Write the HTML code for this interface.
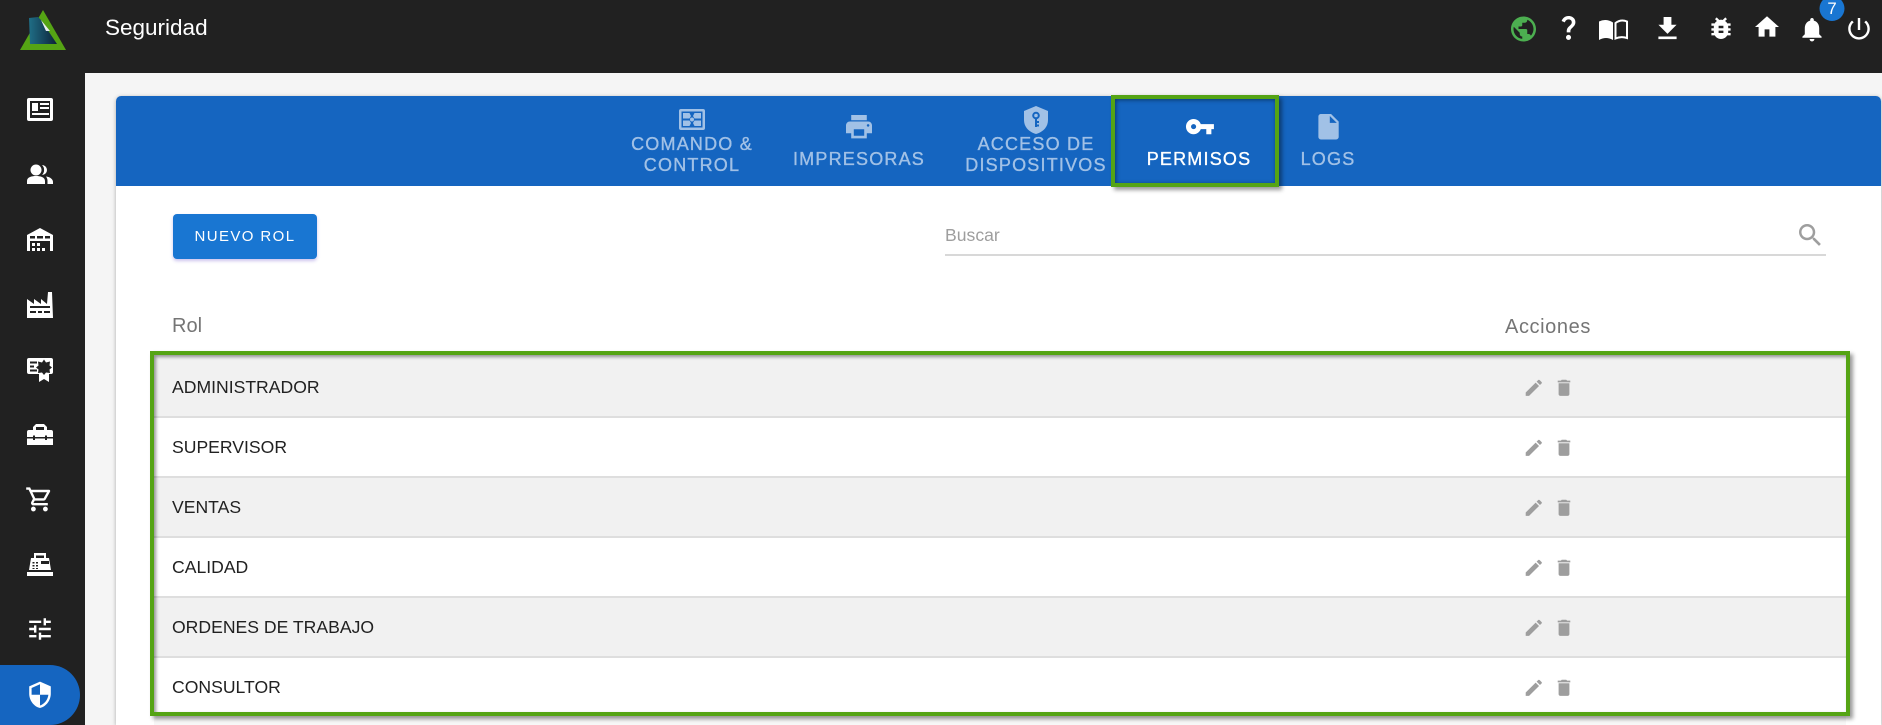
<!DOCTYPE html>
<html lang="es">
<head>
<meta charset="utf-8">
<title>Seguridad</title>
<style>
html,body{margin:0;padding:0;width:1882px;height:725px;overflow:hidden;background:#f5f5f5;font-family:"Liberation Sans",Arial,sans-serif}
div{box-sizing:border-box}
#wrap{position:relative;width:1882px;height:725px;overflow:hidden}
.a{position:absolute}
.t{position:absolute;white-space:nowrap;line-height:24px;height:24px}
.tab{position:absolute;white-space:nowrap;text-align:center;font-size:18px;letter-spacing:1.2px;line-height:21px;color:#a1c1e6;width:240px;-webkit-text-stroke:.35px currentColor}
.row{position:absolute;left:154px;width:1692px;height:60px;border-bottom:2px solid #dedede}
.name{position:absolute;left:172px;font-size:17.6px;line-height:24px;height:24px;color:#212121;white-space:nowrap}
svg{position:absolute;left:0;top:0}
</style>
</head>
<body>
<div id="wrap">
<div class="a" style="left:0;top:0;width:1882px;height:73px;background:#212121"></div>
<div class="a" style="left:0;top:0;width:85px;height:725px;background:#212121"></div>
<div class="a" style="left:0;top:665px;width:80px;height:60px;background:#1565c0;border-radius:0 30px 30px 0"></div>

<div class="a" style="left:116px;top:96px;width:1765px;height:629px;background:#fff;border-radius:5px 5px 0 0;box-shadow:0 1px 4px rgba(0,0,0,.3)"></div>
<div class="a" style="left:116px;top:96px;width:1765px;height:90px;background:#1565c0;border-radius:5px 5px 0 0"></div>

<div class="a" style="left:173px;top:214px;width:144px;height:45px;background:#1976d2;border-radius:4px;box-shadow:0 2px 3px rgba(90,60,200,.3)"></div>
<div class="a" style="left:945px;top:254px;width:881px;height:2px;background:#d8d8d8"></div>

<div class="row" style="top:355px;height:63px;background:#f1f1f1"></div>
<div class="row" style="top:418px;background:#fff"></div>
<div class="row" style="top:478px;background:#f1f1f1"></div>
<div class="row" style="top:538px;background:#fff"></div>
<div class="row" style="top:598px;background:#f1f1f1"></div>
<div class="row" style="top:658px;height:55px;background:#fff;border-bottom:0"></div>
<div class="a" style="left:154px;top:716px;width:1692px;height:9px;background:#f7f7f7"></div>

<div class="a" style="left:150px;top:351px;width:1700px;height:365px;border:4px solid #55a414;box-shadow:3px 3px 4px rgba(0,0,0,.4),inset 2px 2px 3px rgba(0,0,0,.4)"></div>
<div class="a" style="left:1111px;top:95px;width:168px;height:92px;border:4px solid #55a414;box-shadow:3px 3px 4px rgba(0,0,0,.4),inset 1px 1px 4px rgba(0,0,0,.45)"></div>

<svg width="1882" height="725" viewBox="0 0 1882 725" xmlns="http://www.w3.org/2000/svg">
<defs>
<linearGradient id="lg" x1="0" y1="0" x2="1" y2="0"><stop offset="0" stop-color="#1f6e86"/><stop offset="1" stop-color="#0d2238"/></linearGradient>
<path id="ed" d="M3 17.25V21h3.75L17.81 9.94l-3.75-3.75L3 17.25zM20.71 7.04c.39-.39.39-1.02 0-1.41l-2.34-2.34c-.39-.39-1.02-.39-1.41 0l-1.83 1.83 3.75 3.75 1.83-1.83z"/>
<path id="de" d="M6 19c0 1.1.9 2 2 2h8c1.1 0 2-.9 2-2V7H6v12zM19 4h-3.5l-1-1h-5l-1 1H5v2h14V4z"/>
</defs>

<!-- logo -->
<path d="M43 10L66 50H20Z" fill="#55a414"/>
<path d="M29 18L38 17L41 20L57 44H30Z" fill="url(#lg)"/>
<path d="M41 20L50 31L46 31Z" fill="#e8eef0"/>

<g fill="#fff" fill-rule="evenodd">
<!-- newspaper -->
<path d="M29 98H51a2 2 0 0 1 2 2V119a2 2 0 0 1-2 2H29a2 2 0 0 1-2-2V100a2 2 0 0 1 2-2ZM30 101V118H50V101Z"/>
<path d="M32 103H38V111H32ZM40 103H49V105H40ZM40 107H49V109H40ZM32 113H49V115H32Z"/>
<!-- people -->
<circle cx="36" cy="170" r="5.5"/>
<path d="M42 165a5 5 0 0 1 0 10a7 7 0 0 0 0-10ZM27 184V181C27 177 32 176 36 176C40 176 45 177 45 181V184ZM46 176.5C50 177 53 179 53 182V184H47.5V181C47.5 179 47 178 46 176.5Z"/>
<!-- warehouse -->
<path d="M27 251V235L40 228L53 235V251H50V241H30V251ZM30 236V238.5H35V236ZM37 236V238.5H43V236ZM45 236V238.5H50V236Z"/>
<path d="M32 243H35V246H32ZM37 243H40V246H37ZM32 248H35V251H32ZM37 248H40V251H37ZM42 248H45V251H42Z"/>
<!-- factory -->
<path d="M27 318V299L34 304V299L41 304V299L47 304L48 292H52L53 318ZM30 306V308H50V306ZM30 311V313H36V311ZM38 311V313H42V311ZM44 311V313H50V311Z"/>
<!-- award -->
<path d="M29 358H51a2 2 0 0 1 2 2V372a2 2 0 0 1-2 2H49V382L44 379L39 382V374H29a2 2 0 0 1-2-2V360a2 2 0 0 1 2-2ZM30 361.5V363.5H37V361.5ZM30 365.5V367.5H34V365.5ZM30 369.5V371.5H37V369.5ZM44 359.5L46 362.5L50 361.5L49.5 365.5L52 367.5L49.5 369.5L50 373L46 372.5L44 375L42 372.5L38 373L38.5 369.5L36 367.5L38.5 365.5L38 361.5L42 362.5Z"/>
<!-- briefcase -->
<path d="M36 424H44L47 427V430H51a2 2 0 0 1 2 2V437H47V435.5H45V437H35V435.5H33V437H27V432a2 2 0 0 1 2-2H33V427ZM36 427V430H44V427ZM27 438.5H33V440H35V438.5H45V440H47V438.5H53V445H27Z"/>
<!-- cart -->
<g transform="translate(25,485) scale(1.2)"><path d="M15.55 13c.75 0 1.41-.41 1.75-1.03l3.58-6.49c.37-.66-.11-1.48-.87-1.48H5.21l-.94-2H1v2h2l3.6 7.59-1.35 2.44C4.52 15.37 5.48 17 7 17h12v-2H7l1.1-2h7.45zM6.16 6h12.15l-2.76 5H8.53L6.16 6zM7 18c-1.1 0-1.99.9-1.99 2S5.9 22 7 22s2-.9 2-2-.9-2-2-2zm10 0c-1.1 0-1.99.9-1.99 2s.89 2 1.99 2 2-.9 2-2-.9-2-2-2z"/></g>
<!-- cash register -->
<path d="M34 553H46V558H44V555.5H36V558H34ZM31 558H49L51 570H29ZM41 561V564H49V561ZM32.5 562V563.5H34.5V562ZM36 562V563.5H38V562ZM32.5 565V566.5H34.5V565ZM36 565V566.5H38V565ZM32.5 568V569H34.5V568ZM36 568V569H38V568ZM27 572H53V576H27Z"/>
<!-- tune -->
<g transform="translate(25.6,614.6) scale(1.2)"><path d="M3 17v2h6v-2H3zM3 5v2h10V5H3zm10 16v-2h8v-2h-8v-2h-2v6h2zM7 9v2H3v2h4v2h2V9H7zm14 4v-2H11v2h10zm-6-4h2V7h4V5h-4V3h-2v6z"/></g>
<!-- security -->
<g transform="translate(25.6,680.4) scale(1.2)"><path d="M12 1L3 5v6c0 5.55 3.84 10.74 9 12 5.16-1.26 9-6.45 9-12V5l-9-4zm0 10.99h7c-.53 4.12-3.28 7.79-7 8.94V12H5V6.3l7-3.11v8.8z"/></g>
</g>

<!-- top right -->
<g transform="translate(1508.5,14) scale(1.25)" fill="#4caf50"><path d="M12 2C6.48 2 2 6.48 2 12s4.48 10 10 10 10-4.48 10-10S17.52 2 12 2zm-1 17.93c-3.95-.49-7-3.86-7-7.93 0-.62.08-1.21.21-1.79L9 15v1c0 1.1.9 2 2 2v1.93zm6.9-2.54c-.26-.81-1-1.39-1.9-1.39h-1v-3c0-.55-.45-1-1-1H8v-2h2c.55 0 1-.45 1-1V7h2c1.1 0 2-.9 2-2v-.41c2.93 1.19 5 4.06 5 7.41 0 2.08-.8 3.97-2.1 5.39z"/></g>
<g fill="#fff">
<g transform="translate(1553.4,12.2) scale(1.26)"><path d="M11.07 12.85c.77-1.39 2.25-2.21 3.11-3.44.91-1.29.4-3.7-2.18-3.7-1.69 0-2.52 1.28-2.87 2.34L6.54 6.96C7.25 4.83 9.18 3 11.99 3c2.35 0 3.96 1.07 4.78 2.41.7 1.15 1.11 3.3.03 4.9-1.2 1.77-2.35 2.31-2.97 3.45-.25.46-.35.76-.35 2.24h-2.89c-.01-.78-.13-2.05.48-3.15zM14 20c0 1.1-.9 2-2 2s-2-.9-2-2 .9-2 2-2 2 .9 2 2z"/></g>
<path d="M1599 21.5Q1606 18 1613 22.5V40Q1606 36 1599 40Z"/>
<path d="M1615.5 23Q1621 19 1627 21.5V38Q1621 36 1615.5 38.5Z" fill="none" stroke="#fff" stroke-width="2"/>
<g transform="translate(1651.9,13.1) scale(1.3)"><path d="M5 20h14v-2H5v2zM19 9h-4V3H9v6H5l7 7 7-7z"/></g>
<g transform="translate(1706.6,13.8) scale(1.2)"><path d="M20 8h-2.81c-.45-.78-1.07-1.45-1.82-1.96L17 4.41 15.59 3l-2.17 2.17C12.96 5.06 12.49 5 12 5c-.49 0-.96.06-1.41.17L8.41 3 7 4.41l1.62 1.63C7.88 6.55 7.26 7.22 6.81 8H4v2h2.09c-.05.33-.09.66-.09 1v1H4v2h2v1c0 .34.04.67.09 1H4v2h2.81c1.04 1.79 2.97 3 5.19 3s4.15-1.21 5.19-3H20v-2h-2.09c.05-.33.09-.66.09-1v-1h2v-2h-2v-1c0-.34-.04-.67-.09-1H20V8zm-6 8h-4v-2h4v2zm0-4h-4v-2h4v2z"/></g>
<g transform="translate(1752.6,12.6) scale(1.2)"><path d="M10 20v-6h4v6h5v-8h3L12 3 2 12h3v8z"/></g>
<g transform="translate(1797.6,15) scale(1.2)"><path d="M12 22c1.1 0 2-.9 2-2h-4c0 1.1.89 2 2 2zm6-6v-5c0-3.07-1.64-5.64-4.5-6.32V4c0-.83-.67-1.5-1.5-1.5s-1.5.67-1.5 1.5v.68C7.63 5.36 6 7.92 6 11v5l-2 2v1h16v-1l-2-2z"/></g>
<g transform="translate(1844.6,14.4) scale(1.2)"><path d="M13 3h-2v10h2V3zm4.83 2.17l-1.42 1.42C17.99 7.86 19 9.81 19 12c0 3.87-3.13 7-7 7s-7-3.13-7-7c0-2.19 1.01-4.14 2.58-5.42L6.17 5.17C4.23 6.82 3 9.26 3 12c0 4.97 4.03 9 9 9s9-4.03 9-9c0-2.74-1.23-5.18-3.17-6.83z"/></g>
</g>
<circle cx="1832" cy="8.5" r="12.5" fill="#1976d2"/>

<!-- tabs -->
<g fill="#a1c1e6" fill-rule="evenodd">
<path d="M681 109H703a2 2 0 0 1 2 2V128a2 2 0 0 1-2 2H681a2 2 0 0 1-2-2V111a2 2 0 0 1 2-2ZM681.5 111.5V127.5H702.5V111.5Z"/>
<path d="M683 113H689.5L691 116L689.5 118.5H683ZM694.5 113H701V118.5H694.5L693 116ZM683 120.5H689.5L691 123L689.5 126H683ZM694.5 120.5H701V126H694.5L693 123ZM692 117.5a2 2 0 1 1 0 4a2 2 0 1 1 0-4Z"/>
<g transform="translate(843.4,111.1) scale(1.3)"><path d="M19 8H5c-1.66 0-3 1.34-3 3v6h4v4h12v-4h4v-6c0-1.66-1.34-3-3-3zm-3 11H8v-5h8v5zm3-7c-.55 0-1-.45-1-1s.45-1 1-1 1 .45 1 1-.45 1-1 1zm-1-9H6v4h12V3z"/></g>
<path d="M1036 106L1048 111V120C1048 127 1043 132 1036 134C1029 132 1024 127 1024 120V111Z"/>
<g transform="translate(1313.3,111.5) scale(1.27)"><path d="M6 2c-1.1 0-1.99.9-1.99 2L4 20c0 1.1.89 2 1.99 2H18c1.1 0 2-.9 2-2V8l-6-6H6zm7 7V3.5L18.5 9H13z"/></g>
</g>
<g fill="none" stroke="#1565c0" stroke-width="2"><circle cx="1036" cy="115.5" r="2.8"/><path d="M1036 118.5V127M1036 122H1039M1036 125.5H1039"/></g>
<g transform="translate(1184.7,111.4) scale(1.27)" fill="#fff"><path d="M12.65 10C11.83 7.67 9.61 6 7 6c-3.31 0-6 2.69-6 6s2.69 6 6 6c2.61 0 4.83-1.67 5.65-4H17v4h4v-4h2v-4H12.65zM7 14c-1.1 0-2-.9-2-2s.9-2 2-2 2 .9 2 2-.9 2-2 2z"/></g>

<!-- search -->
<g transform="translate(1795.25,220.25) scale(1.25)" fill="#9e9e9e"><path d="M15.5 14h-.79l-.28-.27C15.41 12.59 16 11.11 16 9.5 16 5.91 13.09 3 9.5 3S3 5.91 3 9.5 5.91 16 9.5 16c1.61 0 3.09-.59 4.23-1.57l.27.28v.79l5 4.99L20.49 19l-4.99-5zm-6 0C7.01 14 5 11.99 5 9.5S7.01 5 9.5 5 14 7.01 14 9.5 11.99 14 9.5 14z"/></g>

<!-- row actions -->
<g fill="#9e9e9e">
<use href="#ed" transform="translate(1523,377) scale(.9)"/><use href="#de" transform="translate(1553.2,377) scale(.9)"/>
<use href="#ed" transform="translate(1523,437) scale(.9)"/><use href="#de" transform="translate(1553.2,437) scale(.9)"/>
<use href="#ed" transform="translate(1523,497) scale(.9)"/><use href="#de" transform="translate(1553.2,497) scale(.9)"/>
<use href="#ed" transform="translate(1523,557) scale(.9)"/><use href="#de" transform="translate(1553.2,557) scale(.9)"/>
<use href="#ed" transform="translate(1523,617) scale(.9)"/><use href="#de" transform="translate(1553.2,617) scale(.9)"/>
<use href="#ed" transform="translate(1523,677) scale(.9)"/><use href="#de" transform="translate(1553.2,677) scale(.9)"/>
</g>
</svg>

<div class="t" style="left:105px;top:16px;font-size:22.5px;color:#fff">Seguridad</div>
<div class="t" style="left:1822px;top:-3px;width:20px;text-align:center;font-size:16.8px;color:#fff">7</div>

<div class="tab" style="left:572px;top:134px">COMANDO &amp;<br>CONTROL</div>
<div class="tab" style="left:739px;top:149px">IMPRESORAS</div>
<div class="tab" style="left:916px;top:134px">ACCESO DE<br>DISPOSITIVOS</div>
<div class="tab" style="left:1079px;top:149px;color:#fff">PERMISOS</div>
<div class="tab" style="left:1208px;top:149px">LOGS</div>

<div class="t" style="left:173px;top:225px;width:144px;text-align:center;font-size:15px;letter-spacing:1.4px;color:#fff">NUEVO ROL</div>
<div class="t" style="left:945px;top:223px;font-size:17.6px;color:#9e9e9e">Buscar</div>
<div class="t" style="left:172px;top:314px;font-size:20px;color:#757575">Rol</div>
<div class="t" style="left:1505px;top:315px;font-size:20px;letter-spacing:.6px;color:#757575">Acciones</div>

<div class="name" style="top:375px">ADMINISTRADOR</div>
<div class="name" style="top:435px">SUPERVISOR</div>
<div class="name" style="top:495px">VENTAS</div>
<div class="name" style="top:555px">CALIDAD</div>
<div class="name" style="top:615px">ORDENES DE TRABAJO</div>
<div class="name" style="top:675px">CONSULTOR</div>
</div>
</body>
</html>
